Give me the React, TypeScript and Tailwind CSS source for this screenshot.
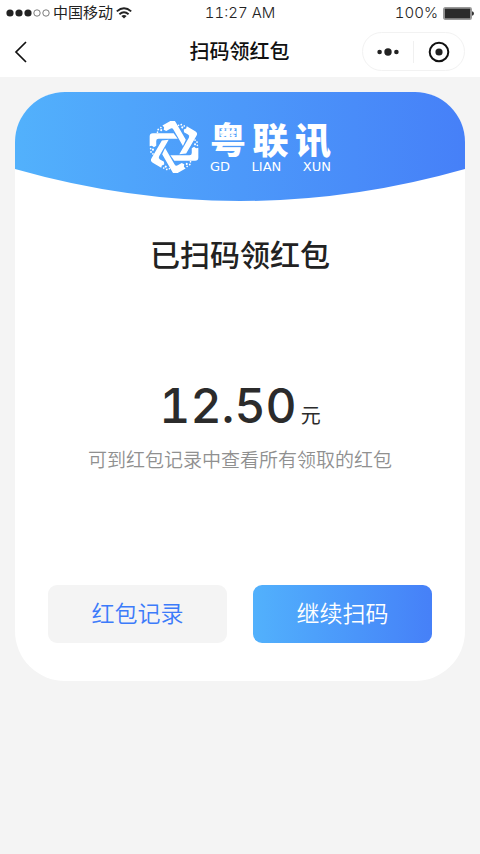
import React from "react";

const DOTS: [number, number, number][] = [
  [-71, 5, 2.6],
  [-64, 8, 3.2],
  [-70, 15, 2.8],
  [-64, 21, 2.6],
];

function PinwheelLogo() {
  return (
    <svg viewBox="-76 -78 152 156" className="h-[52px] w-[50px] shrink-0" aria-hidden="true">
      {[0, 60, 120, 180, 240, 300].map((angle) => (
        <g key={angle} transform={`rotate(${angle})`} fill="#fff">
          <path d="M-74 -2V-32Q-74 -42 -64 -42H-1L11 -25H-47Q-54 -25 -54 -18V-4L-61 1L-67 -4Z" />
          {DOTS.map(([x, y, r]) => (
            <circle key={`${x},${y}`} cx={x} cy={y} r={r} />
          ))}
        </g>
      ))}
    </svg>
  );
}

function WifiIcon() {
  return (
    <svg viewBox="0 0 16 12" className="h-3 w-4" aria-hidden="true">
      <g fill="none" stroke="#222" strokeWidth="1.9">
        <path d="M.8 4.4Q8 -1.8 15.2 4.4" />
        <path d="M3.4 7.2Q8 3.2 12.6 7.2" />
      </g>
      <path d="M8 11.6L5.4 9Q8 6.8 10.6 9Z" fill="#222" />
    </svg>
  );
}

function StatusBar() {
  return (
    <div className="grid h-[26px] grid-cols-[1fr_auto_1fr] items-center px-[6px] text-[15px] leading-5 font-light text-[#222] tabular-nums">
      <div className="flex items-center gap-[3px]">
        <svg viewBox="0 0 44 8" className="h-2 w-11" aria-hidden="true">
          <circle cx="4" cy="4" r="3.6" fill="#222" />
          <circle cx="13" cy="4" r="3.6" fill="#222" />
          <circle cx="22" cy="4" r="3.6" fill="#222" />
          <circle cx="31" cy="4" r="3.2" fill="none" stroke="#444" strokeWidth=".7" />
          <circle cx="40" cy="4" r="3.2" fill="none" stroke="#444" strokeWidth=".7" />
        </svg>
        <span className="font-normal">中国移动</span>
        <WifiIcon />
      </div>
      <span>11:27 AM</span>
      <div className="flex items-center justify-end gap-[5px]">
        <span>100%</span>
        <svg viewBox="0 0 31 13" className="h-[13px] w-[31px]" aria-hidden="true">
          <rect x=".7" y=".7" width="27.6" height="11.6" rx="1.5" fill="#fff" stroke="#999" strokeWidth="1.4" />
          <rect x="1.6" y="1.6" width="25.8" height="9.8" rx=".6" fill="#2b2b2b" />
          <path d="M29 4.2Q31 4.6 31 6.5T29 8.8Z" fill="#333" />
        </svg>
      </div>
    </div>
  );
}

function NavBar() {
  return (
    <div className="grid h-[51px] grid-cols-[1fr_auto_1fr] items-center pr-[15px] pl-[14px]">
      <button type="button" aria-label="返回" className="w-fit">
        <svg viewBox="0 0 14 22" className="h-[22px] w-[14px]" aria-hidden="true">
          <path d="M12 1L2 11L12 21" fill="none" stroke="#111" strokeWidth="1.7" />
        </svg>
      </button>
      <h1 className="text-xl leading-6 font-medium text-[#111]">扫码领红包</h1>
      <div className="flex h-[39px] w-[103px] items-center justify-self-end rounded-full border border-[#f2f2f2]">
        <button type="button" aria-label="更多" className="flex flex-1 justify-center">
          <svg viewBox="0 0 22 8" className="h-2 w-[22px]" aria-hidden="true">
            <circle cx="2.6" cy="4" r="2.3" fill="#222" />
            <circle cx="11" cy="4" r="3.7" fill="#222" />
            <circle cx="19.4" cy="4" r="2.3" fill="#222" />
          </svg>
        </button>
        <span className="h-[22px] w-px bg-[#f0f0f0]" />
        <button type="button" aria-label="关闭" className="flex flex-1 justify-center">
          <svg viewBox="0 0 22 22" className="h-[22px] w-[22px]" aria-hidden="true">
            <circle cx="11" cy="11" r="9.3" fill="none" stroke="#111" strokeWidth="2" />
            <circle cx="11" cy="11" r="3.6" fill="#222" />
          </svg>
        </button>
      </div>
    </div>
  );
}

function Banner() {
  return (
    <div className="relative flex h-[109px] items-center justify-center">
      <svg
        viewBox="0 0 450 109"
        preserveAspectRatio="none"
        className="absolute inset-0 h-full w-full"
        aria-hidden="true"
      >
        <defs>
          <linearGradient id="banner">
            <stop offset="0" stopColor="#52b1fc" />
            <stop offset="1" stopColor="#4680f8" />
          </linearGradient>
        </defs>
        <path d="M0 0H450V77Q225 141 0 77Z" fill="url(#banner)" />
      </svg>
      <div className="relative flex items-center gap-[11px] text-white">
        <PinwheelLogo />
        <div className="w-[121px]">
          <div className="flex justify-between text-4xl leading-10 font-black">
            <span>粤</span>
            <span>联</span>
            <span>讯</span>
          </div>
          <div className="flex justify-between font-['DejaVu_Sans',sans-serif] text-[13px] leading-3">
            <span>GD</span>
            <span>LIAN</span>
            <span>XUN</span>
          </div>
        </div>
      </div>
    </div>
  );
}

export default function App() {
  return (
    <div className="min-h-screen bg-[#f4f4f4] font-['Inter','Noto_Sans_CJK_SC',sans-serif]">
      <header className="bg-white">
        <StatusBar />
        <NavBar />
      </header>
      <main className="px-[15px] pt-[15px]">
        <section className="overflow-hidden rounded-[50px] bg-white pb-[38px] text-center">
          <Banner />
          <h2 className="mt-8 text-[30px] leading-11 font-medium text-[#222]">已扫码领红包</h2>
          <p className="mt-[99px] flex items-baseline justify-center gap-1 text-[#2b2b2b]">
            <span className="text-5xl leading-[60px] font-medium tabular-nums">12.50</span>
            <span className="text-xl">元</span>
          </p>
          <p className="mt-[11px] text-[19px] leading-7 font-[350] text-[#909090]">可到红包记录中查看所有领取的红包</p>
          <div className="mt-[110px] flex gap-[26px] px-[33px] text-[23px] font-[350]">
            <button type="button" className="h-[58px] flex-1 rounded-[9px] bg-[#f4f4f4] text-[#3c7bfa]">
              红包记录
            </button>
            <button
              type="button"
              className="h-[58px] flex-1 rounded-[9px] bg-linear-to-r from-[#52b1fc] to-[#4680f8] text-white"
            >
              继续扫码
            </button>
          </div>
        </section>
      </main>
    </div>
  );
}
